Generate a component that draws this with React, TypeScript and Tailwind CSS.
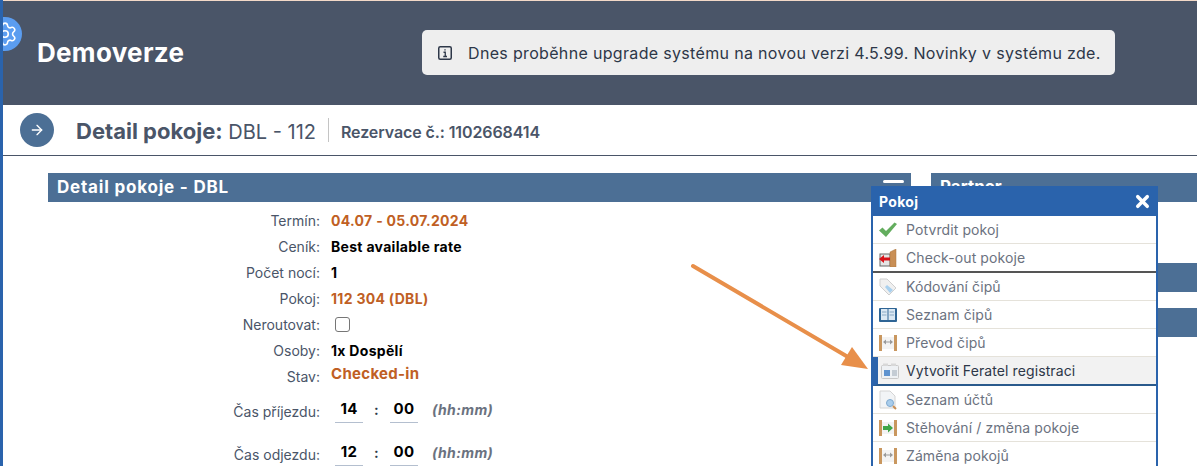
import React from 'react';
import { ArrowRight, Settings, X } from 'lucide-react';

const font = "font-['Inter','Noto_Sans',sans-serif]";

const InfoBox = () => (
    <svg width="14" height="14" viewBox="0 0 14 14" className="mr-[16px] shrink-0">
        <rect x="0.75" y="0.75" width="12.5" height="12.5" rx="1.5" fill="none" stroke="#2d3748" strokeWidth="1.5" />
        <path d="M5.5 6.25 H7.25 V10.5 M5.25 10.5 H9 M7 3.2 V4.6" fill="none" stroke="#2d3748" strokeWidth="1.3" />
    </svg>
);

const CheckIcon = () => (
    <svg width="18" height="16" viewBox="0 0 18 16">
        <path d="M0 8.5 L3.5 5.5 L7 9 L15.5 0.5 L18 2 L7 15 Z" fill="#63ad5e" />
    </svg>
);

const DoorIcon = () => (
    <svg width="18" height="18" viewBox="0 0 18 18">
        <rect x="1" y="5" width="10" height="12" fill="#e5e5e5" stroke="#666" />
        <path d="M11 3 L17 0 V18 H11 Z" fill="#c98f55" stroke="#a8743f" strokeWidth="0.5" />
        <path d="M0 10 L5 6 V8.5 H11 V11.5 H5 V14 Z" fill="#d8121a" />
    </svg>
);

const TagIcon = () => (
    <svg width="18" height="18" viewBox="0 0 18 18">
        <path d="M1 1 H8 L17 10 L10 17 L1 8 Z" fill="#f0f0f0" stroke="#cfcfcf" />
        <path d="M8 7 L14 12 L11 15 L6 9 Z" fill="#a9d0ee" />
    </svg>
);

const BookIcon = () => (
    <svg width="18" height="18" viewBox="0 0 18 18">
        <rect x="0" y="2" width="18" height="14" rx="1" fill="#2f6595" />
        <path d="M2 3 H8.5 V14 H2 Z M9.5 3 H16 V14 H9.5 Z" fill="#dbe8f3" />
        <path d="M3 6 H7.5 M3 9 H7.5 M10.5 6 H15 M10.5 9 H15" stroke="#8aa9c4" />
    </svg>
);

const SwapIcon = ({ green }: { green?: boolean }) => (
    <svg width="18" height="18" viewBox="0 0 18 18">
        <rect x="0" y="1" width="3" height="16" fill="#c9975f" />
        <rect x="15" y="1" width="3" height="16" fill="#c9975f" />
        <rect x="3" y="3" width="12" height="12" fill="#f3f3f3" />
        {green ? (
            <path d="M4 7 H9 V4.5 L14 9 L9 13.5 V11 H4 Z" fill="#3fa648" />
        ) : (
            <path d="M4 8 L7 5.5 V7.5 H11 V5.5 L14 8 L11 10.5 V8.5 H7 V10.5 Z" fill="#9a9a9a" />
        )}
    </svg>
);

const CardIcon = () => (
    <svg width="18" height="16" viewBox="0 0 18 16">
        <rect x="0.5" y="2.5" width="17" height="13" rx="1" fill="#eef1f4" stroke="#c8c8c8" />
        <rect x="2" y="0.5" width="5" height="2.5" fill="#d8d8d8" />
        <rect x="10" y="0.5" width="5" height="2.5" fill="#d8d8d8" />
        <rect x="3" y="7" width="6" height="6" fill="#5f93cf" />
        <path d="M11 8 H16 M11 10 H16 M11 12 H16" stroke="#9aa7b4" />
    </svg>
);

const DocIcon = () => (
    <svg width="18" height="20" viewBox="0 0 18 20">
        <path d="M1 1 H11 L16 6 V18 H1 Z" fill="#f2f4f6" stroke="#d4d4d4" />
        <circle cx="11" cy="13" r="3.5" fill="#a9cdec" stroke="#7fa9cf" />
        <path d="M14 16 L17 19" stroke="#c98f55" strokeWidth="2" />
    </svg>
);

const menuItems = [
    { label: 'Potvrdit pokoj', icon: <CheckIcon /> },
    { label: 'Check-out pokoje', icon: <DoorIcon />, thick: true },
    { label: 'Kódování čipů', icon: <TagIcon /> },
    { label: 'Seznam čipů', icon: <BookIcon /> },
    { label: 'Převod čipů', icon: <SwapIcon /> },
    { label: 'Vytvořit Feratel registraci', icon: <CardIcon />, active: true },
    { label: 'Seznam účtů', icon: <DocIcon /> },
    { label: 'Stěhování / změna pokoje', icon: <SwapIcon green /> },
    { label: 'Záměna pokojů', icon: <SwapIcon /> },
];

const Row: React.FC<{ label: string; className?: string; children: React.ReactNode }> = ({ label, className, children }) => (
    <div className={`flex items-center ${className ?? 'h-[26px]'}`}>
        <div className="w-[272px] text-right text-[14px] text-[#4a5568]">{label}:</div>
        <div className="ml-[11px] flex items-center text-[14px] font-bold tracking-[0.3px]">{children}</div>
    </div>
);

const TimeInput: React.FC<{ h: string }> = ({ h }) => (
    <>
        <div className="ml-[4px] w-[28px] border-b border-[#b4bfcf] pb-[3px] text-center text-[15px] leading-[20px] text-black">{h}</div>
        <span className="w-[27px] pb-[3px] text-center text-[#2d3748]">:</span>
        <div className="w-[28px] border-b border-[#b4bfcf] pb-[3px] text-center text-[15px] leading-[20px] text-black">00</div>
        <span className="ml-[14px] pb-[3px] text-[14px] italic tracking-[0.4px] text-[#6b7280]">(hh:mm)</span>
    </>
);

const App: React.FC = () => {
    return (
        <div className={`relative h-[466px] w-[1197px] overflow-hidden border-l-[3px] border-[#2a63ac] bg-white ${font}`}>
            {/* Header */}
            <div className="flex h-[105px] items-center border-t border-[#f3d9c8] bg-[#4a5568] pb-[1px] pl-[34px]">
                <h1 className="w-[385px] text-[26px] font-bold tracking-[0.3px] text-white">Demoverze</h1>
                <div className="flex h-[45px] w-[693px] items-center rounded-[5px] bg-[#eeeeee] pl-[16px] text-[16px] tracking-[0.33px] whitespace-nowrap text-[#2d3748]">
                    <InfoBox />
                    Dnes proběhne upgrade systému na novou verzi 4.5.99. Novinky v systému zde.
                </div>
            </div>

            {/* Title row */}
            <div className="flex h-[51px] items-center border-b border-[#4a5568] pl-[17px] text-[#4a5568]">
                <div className="flex h-[34px] w-[34px] items-center justify-center rounded-full bg-[#4c6f95]">
                    <ArrowRight size={16} className="text-white" />
                </div>
                <div className="ml-[22px] pt-[3px] text-[20px]">
                    <span className="text-[22px] font-bold">Detail pokoje:</span> DBL - 112
                </div>
                <div className="ml-[12px] h-[24px] border-l border-[#c4c4c4]" />
                <div className="ml-[12px] pt-[3px] text-[16px] font-semibold tracking-[-0.1px]">Rezervace č.: 1102668414</div>
            </div>

            {/* Content */}
            <div className="flex pl-[45px] pt-[17px]">
                <div className="w-[863px]">
                    <div className="flex h-[29px] items-center justify-between bg-[#4c6f95] pl-[9px] pr-[7px] text-[17px] font-bold tracking-[0.8px] text-white">
                        Detail pokoje - DBL
                        <div className="flex w-[21px] flex-col gap-[3px]">
                            <div className="h-[3px] rounded-full bg-white" />
                            <div className="h-[3px] rounded-full bg-white" />
                            <div className="h-[3px] rounded-full bg-white" />
                        </div>
                    </div>
                    <div className="pt-[5px]">
                        <Row label="Termín"><span className="text-[#c05f24]">04.07 - 05.07.2024</span></Row>
                        <Row label="Ceník"><span className="text-black">Best available rate</span></Row>
                        <Row label="Počet nocí"><span className="text-black">1</span></Row>
                        <Row label="Pokoj"><span className="text-[#c05f24]">112 304 (DBL)</span></Row>
                        <Row label="Neroutovat">
                            <div className="ml-[4px] h-[15px] w-[15px] rounded-[3px] border border-[#767676] bg-white" />
                        </Row>
                        <Row label="Osoby"><span className="text-black">1x Dospělí</span></Row>
                        <Row label="Stav"><span className="pb-[4px] text-[15px] text-[#c05f24]">Checked-in</span></Row>
                        <Row label="Čas příjezdu" className="mt-[2px] h-[40px]"><TimeInput h="14" /></Row>
                        <Row label="Čas odjezdu" className="mt-[3px] h-[40px]"><TimeInput h="12" /></Row>
                    </div>
                </div>
                <div className="ml-[20px] flex-1">
                    <div className="h-[29px] bg-[#4c6f95] pl-[9px] text-[17px] font-bold leading-[29px] text-white">Partner</div>
                    <div className="mt-[61px] h-[29px] bg-[#4c6f95]" />
                    <div className="mt-[16px] h-[29px] bg-[#4c6f95]" />
                </div>
            </div>

            {/* Settings bubble */}
            <div className="absolute left-[-15px] top-[17px] flex h-[34px] w-[34px] items-center justify-center rounded-full bg-[#5b9df0]">
                <Settings size={26} strokeWidth={1.5} className="text-white" />
            </div>

            {/* Popup menu */}
            <div className="absolute left-[868px] top-[186px] w-[287px] border-x-2 border-[#2a63ac] bg-white">
                <div className="-mx-[2px] flex h-[30px] items-center justify-between bg-[#2a63ac] pl-[8px] pr-[6px] text-[14px] font-bold tracking-[0.3px] text-white">
                    Pokoj
                    <X size={19} strokeWidth={4.5} />
                </div>
                {menuItems.map((item) => (
                    <div
                        key={item.label}
                        className={`flex items-center text-[14px] tracking-[0.1px] ${
                            item.active
                                ? 'h-[29px] border-b-2 border-l-[5px] border-[#2a63ac] border-b-[#2a5a8c] bg-[#f2f2f2] pl-[3px] text-[#2d3748]'
                                : item.thick
                                  ? 'h-[29px] border-b-2 border-[#555] pl-[6px] text-[#6b7280]'
                                  : 'h-[28px] border-b border-[#e5e2da] pl-[6px] text-[#6b7280]'
                        }`}
                    >
                        <div className="flex w-[18px] justify-center">{item.icon}</div>
                        <span className={item.active ? 'ml-[7px]' : 'ml-[9px]'}>{item.label}</span>
                    </div>
                ))}
            </div>

            {/* Arrow annotation */}
            <svg className="absolute left-[685px] top-[260px]" width="190" height="115" viewBox="0 0 190 115">
                <path d="M5 6 L160 97" stroke="#e88f4a" strokeWidth="4" strokeLinecap="round" />
                <path d="M180 109 L153 105 L164 87 Z" fill="#e88f4a" />
            </svg>
        </div>
    );
};

export default App;
